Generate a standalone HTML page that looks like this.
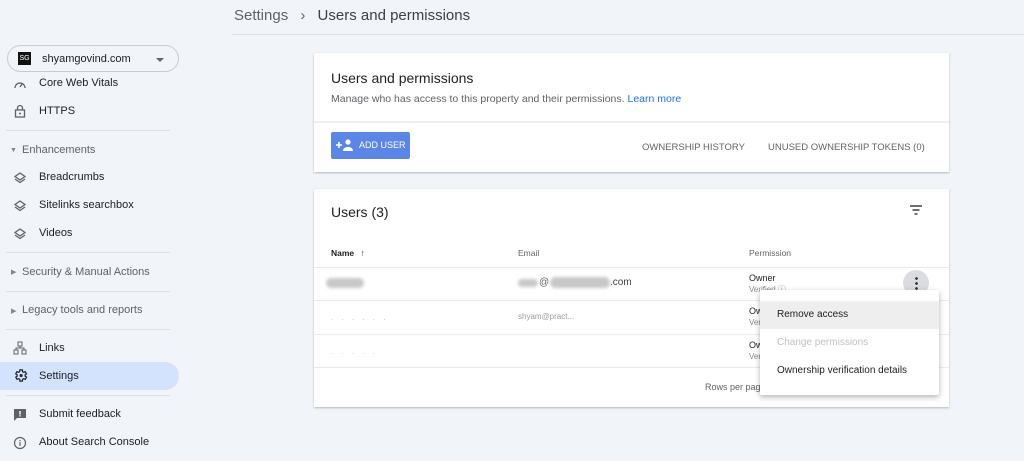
<!DOCTYPE html>
<html><head><meta charset="utf-8"><style>
*{margin:0;padding:0;box-sizing:border-box}
body{width:1024px;height:461px;background:#f1f4f9;font-family:"Liberation Sans",Arial,sans-serif;position:relative;overflow:hidden;color:#202124}
.a{position:absolute;white-space:nowrap}
.si{font-size:11px;color:#202124;left:39px}
.sh{font-size:11px;color:#5f6368;left:22px}
.dv{position:absolute;left:6px;width:164px;height:1px;background:#dde1e6}
.ic{position:absolute;left:13px}
.card{position:absolute;background:#fff;box-shadow:0 1px 2px rgba(0,0,0,.25)}
.hl{position:absolute;left:0;right:0;height:1px;background:#e8eaed}
.blur{position:absolute;background:#c8c8c8;border-radius:6px;filter:blur(1.5px)}
</style></head><body>
<div class="a" style="left:234px;top:7px;font-size:15px;color:#5f6368">Settings <span style="margin:0 8px">›</span> <span style="color:#3c4043">Users and permissions</span></div>
<div style="position:absolute;left:232px;top:34px;width:792px;height:1px;background:#dde1e6"></div>

<div style="position:absolute;left:7px;top:45px;width:172px;height:27px;border:1px solid #c8ccd1;border-radius:14px;background:#f1f4f9"></div>
<div style="position:absolute;left:18px;top:52px;width:13px;height:13px;background:#111;color:#fff;font-size:7px;text-align:center;line-height:13px">SG</div>
<div class="a" style="left:42px;top:53px;font-size:11px;color:#202124">shyamgovind.com</div>
<div class="a" style="left:156px;top:58px;width:0;height:0;border-left:4px solid transparent;border-right:4px solid transparent;border-top:4px solid #5f6368"></div>

<svg class="ic" style="top:77px" width="14" height="14" viewBox="0 0 14 14"><path d="M2 11a5 5 0 1 1 10 0" fill="none" stroke="#5f6368" stroke-width="1.3"/><path d="M7 10l2-3" stroke="#5f6368" stroke-width="1.3"/></svg>
<div class="a si" style="top:77px">Core Web Vitals</div>
<svg class="ic" style="top:104px" width="14" height="14" viewBox="0 0 14 14"><rect x="2.5" y="6" width="9" height="7" fill="none" stroke="#5f6368" stroke-width="1.3"/><path d="M4.5 6V4a2.5 2.5 0 0 1 5 0v2" fill="none" stroke="#5f6368" stroke-width="1.3"/><circle cx="7" cy="9.5" r="1" fill="#5f6368"/></svg>
<div class="a si" style="top:105px">HTTPS</div>
<div class="dv" style="top:130px"></div>
<div class="a" style="left:10px;top:147px;font-size:7px;color:#80868b">▼</div>
<div class="a sh" style="top:144px">Enhancements</div>
<svg class="ic" style="top:171px" width="14" height="14" viewBox="0 0 14 14"><path d="M7 2l5 3.5-5 3.5-5-3.5z M2 8l5 3.5 5-3.5" fill="none" stroke="#5f6368" stroke-width="1.3"/></svg>
<div class="a si" style="top:171px">Breadcrumbs</div>
<svg class="ic" style="top:199px" width="14" height="14" viewBox="0 0 14 14"><path d="M7 2l5 3.5-5 3.5-5-3.5z M2 8l5 3.5 5-3.5" fill="none" stroke="#5f6368" stroke-width="1.3"/></svg>
<div class="a si" style="top:199px">Sitelinks searchbox</div>
<svg class="ic" style="top:227px" width="14" height="14" viewBox="0 0 14 14"><path d="M7 2l5 3.5-5 3.5-5-3.5z M2 8l5 3.5 5-3.5" fill="none" stroke="#5f6368" stroke-width="1.3"/></svg>
<div class="a si" style="top:227px">Videos</div>
<div class="dv" style="top:252px"></div>
<div class="a" style="left:11px;top:268px;font-size:7px;color:#80868b">▶</div>
<div class="a sh" style="top:266px">Security &amp; Manual Actions</div>
<div class="dv" style="top:291px"></div>
<div class="a" style="left:11px;top:307px;font-size:7px;color:#80868b">▶</div>
<div class="a sh" style="top:304px">Legacy tools and reports</div>
<div class="dv" style="top:329px"></div>
<svg class="ic" style="top:341px" width="14" height="14" viewBox="0 0 14 14"><rect x="5" y="1" width="4" height="4" fill="none" stroke="#5f6368"/><rect x="1" y="9" width="4" height="4" fill="none" stroke="#5f6368"/><rect x="9" y="9" width="4" height="4" fill="none" stroke="#5f6368"/><path d="M7 5v2M3 9V7h8v2" fill="none" stroke="#5f6368"/></svg>
<div class="a si" style="top:342px">Links</div>
<div style="position:absolute;left:0;top:362px;width:179px;height:28px;background:#d3e3fd;border-radius:0 14px 14px 0"></div>
<svg class="ic" style="top:368px" width="15" height="15" viewBox="0 0 24 24"><path d="M19.4 13a7.5 7.5 0 0 0 0-2l2.1-1.6-2-3.5-2.5 1a7 7 0 0 0-1.7-1L15 3h-4l-.4 2.9a7 7 0 0 0-1.7 1l-2.5-1-2 3.5L6.6 11a7.5 7.5 0 0 0 0 2l-2.1 1.6 2 3.5 2.5-1a7 7 0 0 0 1.7 1L11 21h4l.4-2.9a7 7 0 0 0 1.7-1l2.5 1 2-3.5z" fill="none" stroke="#202124" stroke-width="2"/><circle cx="13" cy="12" r="2.5" fill="#202124"/></svg>
<div class="a si" style="top:370px">Settings</div>
<div class="dv" style="top:395px"></div>
<svg class="ic" style="top:408px" width="14" height="14" viewBox="0 0 14 14"><path d="M1 1h12v9H4l-3 3z" fill="#5f6368"/><rect x="6.3" y="3" width="1.4" height="3.5" fill="#fff"/><rect x="6.3" y="7.2" width="1.4" height="1.3" fill="#fff"/></svg>
<div class="a si" style="top:408px">Submit feedback</div>
<svg class="ic" style="top:436px" width="14" height="14" viewBox="0 0 14 14"><circle cx="7" cy="7" r="5.5" fill="none" stroke="#5f6368" stroke-width="1.2"/><rect x="6.4" y="6" width="1.2" height="4" fill="#5f6368"/><rect x="6.4" y="4" width="1.2" height="1.2" fill="#5f6368"/></svg>
<div class="a si" style="top:436px">About Search Console</div>

<div class="card" style="left:314px;top:53px;width:635px;height:119px">
 <div class="a" style="left:17px;top:17px;font-size:14px;color:#202124">Users and permissions</div>
 <div class="a" style="left:17px;top:40px;font-size:10.5px;color:#5f6368">Manage who has access to this property and their permissions. <span style="color:#1a73e8">Learn more</span></div>
 <div class="hl" style="top:68px;background:#eceff2;height:2px"></div>
 <div class="a" style="left:17px;top:79px;width:79px;height:27px;background:#5b86e5;border-radius:2px;color:#fff;font-size:9px;line-height:27px;padding-left:28px">ADD USER</div>
 <svg class="a" style="left:22px;top:86px" width="18" height="12" viewBox="0 0 18 12"><path d="M0 6h6M3 3v6" stroke="#fff" stroke-width="1.6"/><circle cx="12" cy="3" r="2.6" fill="#fff"/><path d="M7 12c0-3 2.5-4 5-4s5 1 5 4z" fill="#fff"/></svg>
 <div class="a" style="left:328px;top:89px;font-size:9.5px;color:#5f6368">OWNERSHIP HISTORY</div>
 <div class="a" style="left:454px;top:89px;font-size:9.5px;color:#5f6368">UNUSED OWNERSHIP TOKENS (0)</div>
</div>

<div class="card" style="left:314px;top:189px;width:635px;height:218px">
 <div class="a" style="left:17px;top:15px;font-size:14px;color:#202124">Users (3)</div>
 <svg class="a" style="left:595px;top:15px" width="14" height="12" viewBox="0 0 14 12"><path d="M1 2h12M3.5 6h7M5.5 10h3" stroke="#3c4043" stroke-width="1.4"/></svg>
 <div class="a" style="left:17px;top:59px;font-size:8.5px;color:#202124;font-weight:bold">Name <span style="font-weight:normal;margin-left:4px">↑</span></div>
 <div class="a" style="left:204px;top:59px;font-size:8.5px;color:#5f6368">Email</div>
 <div class="a" style="left:435px;top:59px;font-size:8.5px;color:#5f6368">Permission</div>
 <div class="hl" style="top:78px"></div>
 <div class="blur" style="left:12px;top:89px;width:38px;height:10px"></div>
 <div class="blur" style="left:204px;top:90px;width:20px;height:8px"></div>
 <div class="a" style="left:225px;top:88px;font-size:10px;color:#5f6368">@</div>
 <div class="blur" style="left:236px;top:88px;width:60px;height:11px"></div>
 <div class="a" style="left:296px;top:88px;font-size:10px;color:#3c4043">.com</div>
 <div class="a" style="left:435px;top:84px;font-size:9px;color:#202124">Owner</div>
 <div class="a" style="left:435px;top:95px;font-size:8px;color:#80868b">Verified ⓘ</div>
 <div style="position:absolute;left:589px;top:81px;width:26px;height:26px;border-radius:50%;background:#dadce0"></div>
 <div class="a" style="left:601px;top:87px;width:3px;height:14px;background:radial-gradient(circle,#3c4043 1.3px,transparent 1.5px) 0 0/3px 5px"></div>
 <div class="hl" style="top:111px"></div>
 <div class="a" style="left:17px;top:124px;font-size:8px;color:#bbb;letter-spacing:3px">. . . . . .</div>
 <div class="a" style="left:204px;top:123px;font-size:8px;color:#999">shyam@pract...</div>
 <div class="a" style="left:435px;top:117px;font-size:9px;color:#202124">Ow</div>
 <div class="a" style="left:435px;top:129px;font-size:8px;color:#80868b">Ver</div>
 <div class="hl" style="top:145px"></div>
 <div class="a" style="left:17px;top:158px;font-size:8px;color:#ccc;letter-spacing:3px">. . . . .</div>
 <div class="a" style="left:435px;top:151px;font-size:9px;color:#202124">Ow</div>
 <div class="a" style="left:435px;top:163px;font-size:8px;color:#80868b">Ver</div>
 <div class="hl" style="top:178px"></div>
 <div class="a" style="left:391px;top:193px;font-size:9px;color:#5f6368">Rows per pag</div>
</div>

<div style="position:absolute;left:760px;top:290px;width:179px;height:105px;background:#fff;box-shadow:0 2px 6px rgba(0,0,0,.3);border-radius:2px">
 <div style="position:absolute;left:0;top:11px;width:179px;height:28px;background:#eeeeee"></div>
 <div class="a" style="left:17px;top:19px;font-size:10px;color:#202124">Remove access</div>
 <div class="a" style="left:17px;top:47px;font-size:10px;color:#bdc1c6">Change permissions</div>
 <div class="a" style="left:17px;top:75px;font-size:10px;color:#202124">Ownership verification details</div>
</div>
</body></html>
